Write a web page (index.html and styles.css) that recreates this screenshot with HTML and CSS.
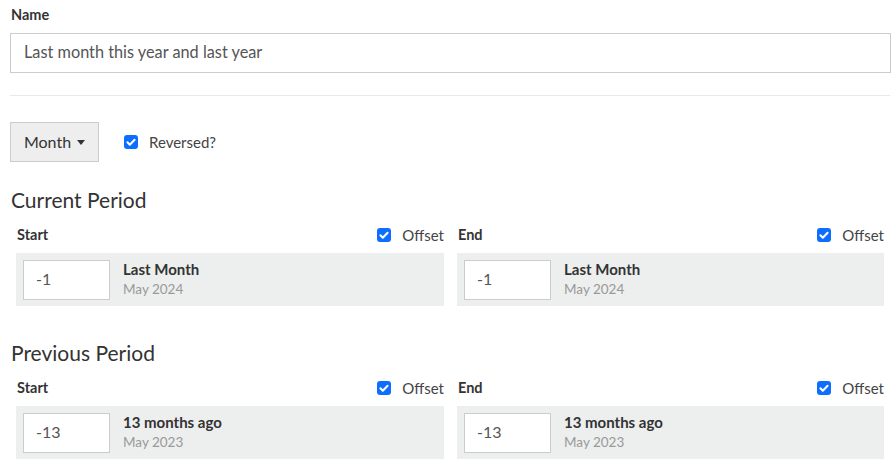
FILE: index.html
```html
<!DOCTYPE html>
<html>
<head>
<meta charset="utf-8">
<link rel="stylesheet" href="styles.css">
</head>
<body>
<div class="page">
  <label class="field-label">Name</label>
  <div class="text-input">Last month this year and last year</div>
  <hr class="divider">
  <div class="toolbar">
    <button class="dropdown">Month <span class="caret"></span></button>
    <span class="check-label"><svg class="check" width="14" height="14" viewBox="0 0 14 14"><rect width="14" height="14" rx="3" fill="#0d6efd"/><path d="M3.4 7.3l2.4 2.4 4.8-5" fill="none" stroke="#fff" stroke-width="2" stroke-linecap="round" stroke-linejoin="round"/></svg>Reversed?</span>
  </div>

  <h2 class="period-title">Current Period</h2>
  <div class="period-grid">
    <div class="period-col">
      <div class="col-head"><span class="col-name">Start</span><span class="check-label"><svg class="check" width="14" height="14" viewBox="0 0 14 14"><rect width="14" height="14" rx="3" fill="#0d6efd"/><path d="M3.4 7.3l2.4 2.4 4.8-5" fill="none" stroke="#fff" stroke-width="2" stroke-linecap="round" stroke-linejoin="round"/></svg>Offset</span></div>
      <div class="period-box">
        <div class="num-input">-1</div>
        <div class="period-info"><div class="info-main">Last Month</div><div class="info-sub">May 2024</div></div>
      </div>
    </div>
    <div class="period-col">
      <div class="col-head"><span class="col-name">End</span><span class="check-label"><svg class="check" width="14" height="14" viewBox="0 0 14 14"><rect width="14" height="14" rx="3" fill="#0d6efd"/><path d="M3.4 7.3l2.4 2.4 4.8-5" fill="none" stroke="#fff" stroke-width="2" stroke-linecap="round" stroke-linejoin="round"/></svg>Offset</span></div>
      <div class="period-box">
        <div class="num-input">-1</div>
        <div class="period-info"><div class="info-main">Last Month</div><div class="info-sub">May 2024</div></div>
      </div>
    </div>
  </div>

  <h2 class="period-title second">Previous Period</h2>
  <div class="period-grid">
    <div class="period-col">
      <div class="col-head"><span class="col-name">Start</span><span class="check-label"><svg class="check" width="14" height="14" viewBox="0 0 14 14"><rect width="14" height="14" rx="3" fill="#0d6efd"/><path d="M3.4 7.3l2.4 2.4 4.8-5" fill="none" stroke="#fff" stroke-width="2" stroke-linecap="round" stroke-linejoin="round"/></svg>Offset</span></div>
      <div class="period-box">
        <div class="num-input">-13</div>
        <div class="period-info"><div class="info-main">13 months ago</div><div class="info-sub">May 2023</div></div>
      </div>
    </div>
    <div class="period-col">
      <div class="col-head"><span class="col-name">End</span><span class="check-label"><svg class="check" width="14" height="14" viewBox="0 0 14 14"><rect width="14" height="14" rx="3" fill="#0d6efd"/><path d="M3.4 7.3l2.4 2.4 4.8-5" fill="none" stroke="#fff" stroke-width="2" stroke-linecap="round" stroke-linejoin="round"/></svg>Offset</span></div>
      <div class="period-box">
        <div class="num-input">-13</div>
        <div class="period-info"><div class="info-main">13 months ago</div><div class="info-sub">May 2023</div></div>
      </div>
    </div>
  </div>
</div>
</body>
</html>
```
FILE: styles.css
```css
* { box-sizing: border-box; }
html, body { margin: 0; padding: 0; background: #fff; }
body {
  font-family: Lato, "Open Sans", "Liberation Sans", sans-serif;
  color: #333;
  font-size: 14px;
}
.page {
  width: 881px;
  margin-left: 10px;
  padding-top: 5px;
}
.field-label {
  display: block;
  font-weight: 700;
  font-size: 14.5px;
  line-height: 20px;
  margin-bottom: 8px;
  padding-left: 1px;
}
.text-input {
  height: 40px;
  border: 1px solid #cccccc;
  padding: 0 13px;
  font-size: 16.3px;
  line-height: 35px;
  color: #555;
}
.divider {
  border: 0;
  border-top: 1px solid #e8e8e8;
  margin: 22px 0 26px;
  width: 880px;
}
.toolbar {
  display: flex;
  align-items: center;
  gap: 25px;
}
.dropdown {
  height: 40px;
  width: 89px;
  background: #eeeeee;
  border: 1px solid #cccccc;
  border-radius: 0;
  font-family: inherit;
  font-size: 16px;
  color: #333;
  padding: 0 0 2px 0;
  display: flex;
  align-items: center;
  justify-content: center;
  gap: 6px;
}
.caret {
  display: inline-block;
  width: 0;
  height: 0;
  border-top: 5px solid #333;
  border-left: 4.5px solid transparent;
  border-right: 4.5px solid transparent;
  margin-top: 2px;
}
.check-label {
  display: inline-flex;
  align-items: center;
  gap: 11px;
  font-size: 15px;
  color: #444;
  line-height: 20px;
}
.check { flex: none; }
.period-title {
  font-size: 21px;
  font-weight: 400;
  line-height: 28px;
  margin: 24px 0 0;
  padding-left: 1px;
}
.period-title.second { margin-top: 33px; }
.period-grid {
  display: grid;
  grid-template-columns: 428px 427px;
  gap: 13px;
  padding-left: 6px;
  margin-top: 11px;
}
.col-head {
  display: flex;
  justify-content: space-between;
  align-items: center;
  line-height: 20px;
  margin-bottom: 8px;
}
.col-name {
  font-weight: 700;
  font-size: 14.5px;
  padding-left: 1px;
}
.period-box {
  background: #edeeee;
  height: 53px;
  padding: 7px;
  display: flex;
  align-items: center;
  gap: 13px;
}
.num-input {
  width: 87px;
  height: 40px;
  background: #fff;
  border: 1px solid #cccccc;
  padding-left: 12px;
  font-size: 16px;
  line-height: 35px;
  color: #555;
}
.period-info {
  line-height: 20px;
  margin-top: -1px;
}
.info-main {
  font-weight: 700;
  font-size: 15px;
  color: #333;
}
.info-sub {
  font-size: 13.5px;
  color: #999;
}
```
